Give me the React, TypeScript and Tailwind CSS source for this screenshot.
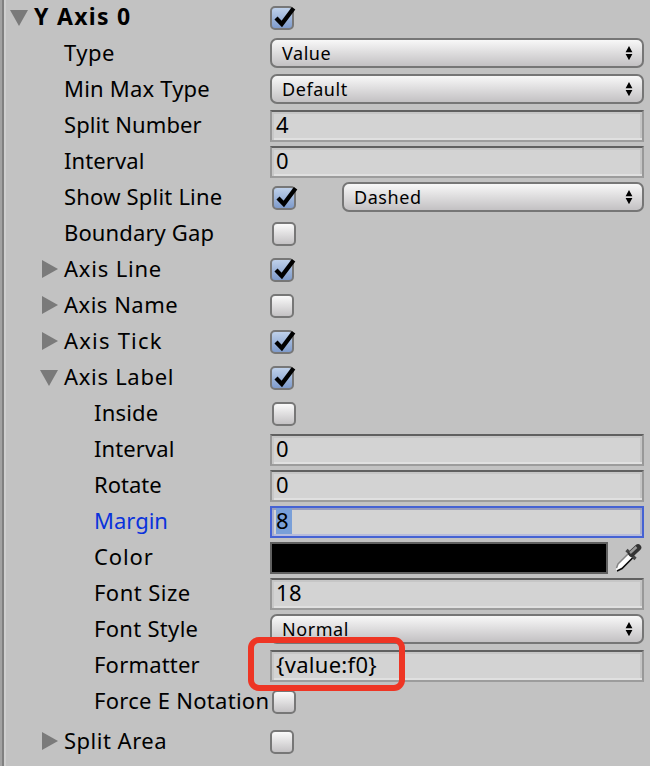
import React from "react";

type Control = "input" | "popup" | "check" | "color" | "splitLine";

interface Row {
  label: string;
  level: 0 | 1 | 2;
  control: Control;
  value?: string;
  checked?: boolean;
  nudge?: boolean;
  fold?: "open" | "closed";
  focused?: boolean;
  track?: string;
  extra?: string;
}

const rows: Row[] = [
  { label: "Y Axis 0", level: 0, control: "check", checked: true, fold: "open", track: "tracking-[1.3px]" },
  { label: "Type", level: 1, control: "popup", value: "Value", track: "tracking-[0.5px]" },
  { label: "Min Max Type", level: 1, control: "popup", value: "Default", track: "tracking-[0.2px]" },
  { label: "Split Number", level: 1, control: "input", value: "4", track: "tracking-[0.1px]" },
  { label: "Interval", level: 1, control: "input", value: "0", track: "tracking-[0.1px]" },
  { label: "Show Split Line", level: 1, control: "splitLine", value: "Dashed", track: "tracking-[0.2px]" },
  { label: "Boundary Gap", level: 1, control: "check", nudge: true, track: "tracking-[0.12px]" },
  { label: "Axis Line", level: 1, control: "check", checked: true, fold: "closed", track: "tracking-[0.8px]" },
  { label: "Axis Name", level: 1, control: "check", fold: "closed", track: "tracking-[0.5px]" },
  { label: "Axis Tick", level: 1, control: "check", checked: true, fold: "closed", track: "tracking-[1.2px]" },
  { label: "Axis Label", level: 1, control: "check", checked: true, fold: "open", track: "tracking-[0.7px]" },
  { label: "Inside", level: 2, control: "check", nudge: true, track: "tracking-[0.2px]" },
  { label: "Interval", level: 2, control: "input", value: "0", track: "tracking-[0.1px]" },
  { label: "Rotate", level: 2, control: "input", value: "0" },
  { label: "Margin", level: 2, control: "input", value: "8", focused: true },
  { label: "Color", level: 2, control: "color", track: "tracking-[0.9px]" },
  { label: "Font Size", level: 2, control: "input", value: "18", track: "tracking-[0.45px]" },
  { label: "Font Style", level: 2, control: "popup", value: "Normal", track: "tracking-[0.3px]" },
  { label: "Formatter", level: 2, control: "input", value: "{value:f0}", track: "tracking-[0.2px]" },
  { label: "Force E Notation", level: 2, control: "check", nudge: true, track: "tracking-[0.28px]" },
  { label: "Split Area", level: 1, control: "check", fold: "closed", extra: "mt-1", track: "tracking-[0.5px]" },
];

function Check({ checked, nudge }: { checked?: boolean; nudge?: boolean }) {
  return (
    <span
      className={`relative mt-1.5 block size-6 shrink-0 rounded-[5px] border-2 border-[#777] bg-linear-to-b ${
        checked ? "from-[#bfd1ea] to-[#7f9bcb]" : "from-[#fafafa] to-[#c4c2c4]"
      } ${nudge ? "ml-0.5" : ""}`}
    >
      {checked && (
        <svg className="absolute -left-0.5 -top-0.5 overflow-visible" width="24" height="24" viewBox="0 0 24 24">
          <path d="M6 12 L11.8 18 L23.6 2.2" fill="none" stroke="#000" strokeWidth="4.3" />
        </svg>
      )}
    </span>
  );
}

function Popup({ value }: { value?: string }) {
  return (
    <div className="mt-0.5 flex h-[30px] grow items-center justify-between rounded-[7px] border-2 border-[#767676] bg-linear-to-b from-[#f8f8f8] to-[#c3c1c3] pl-2.5 pr-[9px]">
      <span className="text-[18px] leading-[26px] tracking-[0.55px]">{value}</span>
      <svg width="8" height="14" viewBox="0 0 8 14">
        <path d="M4 0 L7.4 6.2 H0.6Z M0.6 8 H7.4 L4 14.2Z" fill="#000" />
      </svg>
    </div>
  );
}

function Field({ value, focused }: { value?: string; focused?: boolean }) {
  return (
    <div
      className={`mt-0.5 flex h-8 grow border-2 bg-[#d3d3d3] ${
        focused
          ? "border-[#4562d3] shadow-[inset_0_2px_0_#989dbd,inset_2px_0_0_#a9aecb,inset_0_-2px_0_#b6bbdc,inset_-2px_0_0_#a9aecb]"
          : "border-x-[#989898] border-b-[#9c9c9c] border-t-[#606060] shadow-[inset_0_2px_0_#c6c6c6,inset_2px_0_0_#c8c8c8,inset_0_-2px_0_#e0e0e0,inset_-2px_0_0_#c4c4c4]"
      } pl-1`}
    >
      <span className={`h-[26px] text-[22px] leading-[25px] tracking-[0.3px] ${focused ? "w-4 bg-[#799fd8]" : ""}`}>
        {value}
      </span>
    </div>
  );
}

function Dropper() {
  return (
    <svg className="ml-1.5 mt-0.5 shrink-0" width="30" height="32" viewBox="0 0 30 32">
      <path d="M2 28 L3.5 22 L15 10.5 L20 15 L8 26.5 L3 29Z" fill="#fff" />
      <path d="M2.5 26 L4 22 L15 11" fill="none" stroke="#858585" strokeWidth="1.5" />
      <path d="M3 29 L8 26.5 L19.5 15" fill="none" stroke="#0a0a0a" strokeWidth="1.6" />
      <path d="M12.5 8 L21.5 17" stroke="#444" strokeWidth="3.2" />
      <path d="M17.5 11.5 L24 5.5" stroke="#333" strokeWidth="6.6" strokeLinecap="round" />
      <path d="M16 11 L22.5 5" stroke="#9a9a9a" strokeWidth="2.4" />
    </svg>
  );
}

function ControlView({ row }: { row: Row }) {
  switch (row.control) {
    case "input":
      return <Field value={row.value} focused={row.focused} />;
    case "popup":
      return <Popup value={row.value} />;
    case "check":
      return <Check checked={row.checked} nudge={row.nudge} />;
    case "color":
      return (
        <>
          <div className="mt-0.5 h-8 w-[338px] border-2 border-[#606060] bg-black" />
          <Dropper />
        </>
      );
    case "splitLine":
      return (
        <>
          <Check checked nudge />
          <div className="ml-[46px] flex grow">
            <Popup value={row.value} />
          </div>
        </>
      );
  }
}

function Fold({ state }: { state: "open" | "closed" }) {
  return (
    <svg width="18" height="18" viewBox="0 0 18 18">
      <path d={state === "open" ? "M0 2 H18 L9 18Z" : "M2 0 L18 9 L2 18Z"} fill="#7a7a7a" />
    </svg>
  );
}

export default function App() {
  return (
    <div className="relative h-[766px] w-[650px] overflow-hidden border-l-2 border-[#a2a2a2] bg-[#c2c2c2] font-['Noto_Sans','Open_Sans',sans-serif] text-black">
      <div className="h-full border-l-2 border-[#808080]">
        <div className="h-full border-l-2 border-[#cfcfcf]">
          {rows.map((row, i) => (
            <div key={i} className={`flex h-9 ${row.extra ?? ""}`}>
              <div
                className={`flex w-[264px] shrink-0 ${
                  row.level === 0 ? "pl-1" : row.level === 1 ? "pl-[34px]" : "pl-16"
                }`}
              >
                <span className="mt-2 w-6 shrink-0">{row.fold && <Fold state={row.fold} />}</span>
                <span
                  className={`whitespace-nowrap leading-[32px] ${
                    row.level === 0 ? "text-[23px] font-bold" : "text-[22px]"
                  } ${row.track ?? ""} ${row.focused ? "text-[#0a32dc]" : ""}`}
                >
                  {row.label}
                </span>
              </div>
              <div className="flex w-[374px]">
                <ControlView row={row} />
              </div>
            </div>
          ))}
        </div>
      </div>
      <div className="absolute left-[246px] top-[637px] h-[54px] w-[157px] rounded-[11px] border-[6px] border-[#ee3524]" />
    </div>
  );
}
